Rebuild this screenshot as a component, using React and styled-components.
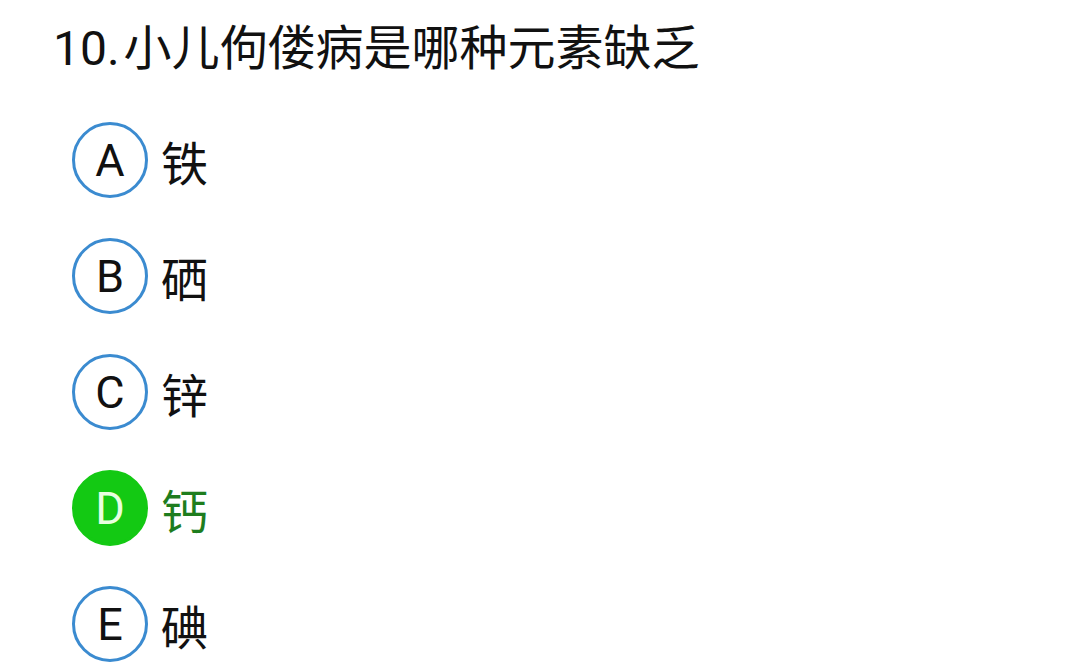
import React from "react";
import styled, { createGlobalStyle } from "styled-components";

const Global = createGlobalStyle`
  body {
    margin: 0;
    background: #ffffff;
    font-family: Roboto, "Noto Sans CJK SC", sans-serif;
  }
`;

const Page = styled.div`
  width: 1080px;
  height: 672px;
  overflow: hidden;
  background: #fff;
  padding: 19px 0 0 53px;
  box-sizing: border-box;
`;

const Title = styled.div`
  font-size: 48px;
  line-height: 60px;
  color: #111;
  word-spacing: -8px;
  font-family: Roboto, "Noto Sans CJK SC", sans-serif;
`;

const List = styled.div`
  display: flex;
  flex-direction: column;
  gap: 40px;
  margin: 43px 0 0 19px;
`;

const Row = styled.div`
  display: flex;
  align-items: center;
  gap: 13px;
  height: 76px;
`;

const Badge = styled.div`
  width: 76px;
  height: 76px;
  box-sizing: border-box;
  border-radius: 50%;
  border: 3px solid ${(p) => (p.$correct ? "#13c913" : "#3b8bd0")};
  background: ${(p) => (p.$correct ? "#13c913" : "#fff")};
  color: ${(p) => (p.$correct ? "#e8ffe0" : "#111")};
  display: flex;
  align-items: center;
  justify-content: center;
  font-size: 45px;
  font-family: Roboto, sans-serif;
`;

const Label = styled.div`
  font-size: 47px;
  color: ${(p) => (p.$correct ? "#1e7d1e" : "#111")};
  font-family: "Noto Sans CJK SC", sans-serif;
`;

const options = [
  { key: "A", text: "铁" },
  { key: "B", text: "硒" },
  { key: "C", text: "锌" },
  { key: "D", text: "钙", correct: true },
  { key: "E", text: "碘" },
];

export default function App() {
  return (
    <Page>
      <Global />
      <Title>10. 小儿佝偻病是哪种元素缺乏</Title>
      <List>
        {options.map((o) => (
          <Row key={o.key}>
            <Badge $correct={o.correct}>{o.key}</Badge>
            <Label $correct={o.correct}>{o.text}</Label>
          </Row>
        ))}
      </List>
    </Page>
  );
}
